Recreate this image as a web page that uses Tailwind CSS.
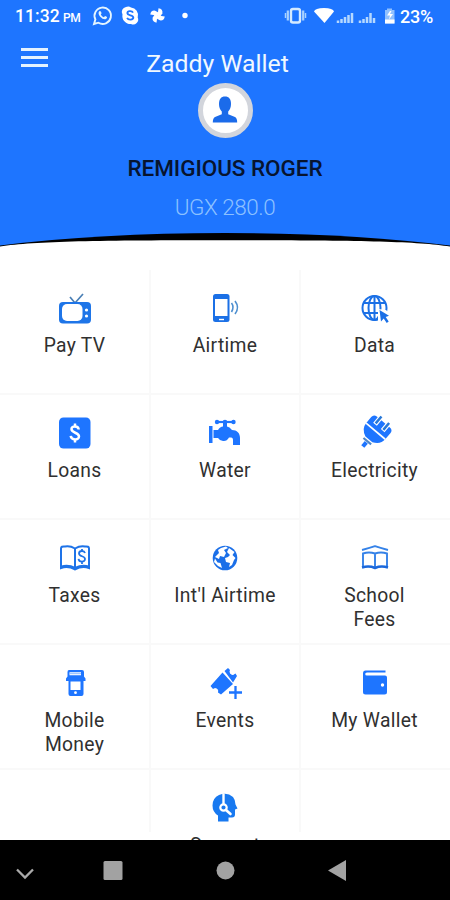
<!DOCTYPE html>
<html lang="en">
<head>
<meta charset="utf-8">
<title>Zaddy Wallet</title>
<script src="https://cdn.jsdelivr.net/npm/@tailwindcss/browser@4"></script>
</head>
<body class="bg-white">
<div class="relative flex h-[900px] w-[450px] flex-col overflow-hidden bg-white font-['Roboto',sans-serif] text-[#303030]">
  <header class="flex h-[270px] shrink-0 flex-col">
    <div class="flex h-[233px] shrink-0 flex-col bg-[#1e75ff]">
      <div class="flex h-8 items-center text-white">
        <div class="ml-[15px] flex w-[67px] items-baseline pt-px text-[17.500px] leading-8 font-medium whitespace-nowrap"><span class="tracking-[0.1px]">11:32</span><span class="ml-[3px] text-[12px] tracking-[-0.4px]">PM</span></div>
        <svg class="ml-[10px]" width="100" height="22" viewBox="92 5 100 22" fill="none">
          <path d="M94 24l1.400-4.600A8.200 8.200 0 1 1 98.400 22.700Z" stroke="#e4f5ff" stroke-width="1.900"/>
          <path d="M99 11.500q1-1.200 2 .2l.6 1.500-.8 1.200q1 2 3 2.800l1.300-1.200 2 1.100q.2 1.500-1.600 2.200-2.700.4-5.300-2.500-2.500-3-1.200-5.300Z" fill="#e4f5ff"/>
          <path d="M126 7a5 5 0 0 1 5 .4 7.800 7.800 0 0 1 6.700 10A5 5 0 0 1 131 24a8 8 0 0 1-8.500-9.500A5 5 0 0 1 126 7Z" fill="#fff"/>
          <path d="M133 12.600c-1-2-5.600-2-5.600.5 0 3 5.900 1.500 5.900 4.500 0 2.500-5 2.700-6.200.3" stroke="#1e75ff" stroke-width="1.900"/>
          <g fill="#fff" transform="rotate(8 157.500 15.500)"><path d="M157.500 16.500V8.200q4.500 0 4.500 4.300l-1.500 3.500Z"/><path d="M156.500 15.500h8.300q0 4.500-4.300 4.500l-3.500-1.500Z"/><path d="M157.500 14.500v8.300q-4.500 0-4.500-4.300l1.500-3.500Z"/><path d="M158.500 15.500h-8.300q0-4.500 4.300-4.500l3.500 1.500Z"/></g>
          <circle cx="185" cy="15.500" r="2.700" fill="#fff"/>
        </svg>
        <svg class="ml-[92px]" width="114" height="22" viewBox="284 5 114 22" fill="none">
          <rect x="291" y="9" width="9" height="13.500" rx="2" stroke="#d5eaff" stroke-width="2.400"/>
          <path d="M287.800 10.500v10M303.200 10.500v10" stroke="#a9d2ff" stroke-width="2.200"/><path d="M285.500 13v5M305.500 13v5" stroke="#a9d2ff" stroke-width="1.500"/>
          <path d="M314 11.500q1-3.500 10-3.500t10 3.500L324.500 23Z" fill="#fff"/>
          <path d="M338 20.500V23M341.500 19v4M345 17v6M348.500 15v8M352 13v10M360 20.500V23M363.500 19v4M367 17v6M370.500 13v10M374 18v5" stroke="#b5d8ff" stroke-width="2.500"/>
          <path d="M385 10h2V8.500h5V10h2.500v13.500H385Z" fill="#8fc0ff"/><path d="M385 19.500h9.500v4H385Z" fill="#fff"/><path d="M390 11l-3 4.500h3l-1 4 4-5.500h-3l1.500-3Z" fill="#fff"/>
        </svg>
        <span class="ml-[2px] text-[18px] font-medium tracking-[-0.200px]">23%</span>
      </div>
      <div class="flex h-[50px]">
        <div class="ml-[21px] mt-[16px] flex w-[27px] flex-col gap-[5.500px]"><i class="block h-[2.700px] bg-[#e4f2ff]"></i><i class="block h-[2.700px] bg-[#e4f2ff]"></i><i class="block h-[2.700px] bg-[#e4f2ff]"></i></div>
        <h1 class="ml-[77px] mt-[15.500px] w-[185px] text-center text-[24.800px] leading-8 text-[#f0f8ff]">Zaddy Wallet</h1>
      </div>
      <div class="mt-[1px] flex size-[55px] items-center justify-center self-center rounded-full border-[5px] border-[#d2d5dc] bg-white">
        <svg width="26" height="30" viewBox="0 0 26 30" fill="#1b6bea"><path d="M7 8c0-5 2-7.500 6-7.500S19 3 19 8c0 3-1 6-2.800 7.500v2.700L23 21q2.200 1 2.200 5.500H.8Q.8 22 3 21l6.800-2.800v-2.700C8 14 7 11 7 8Z"/></svg>
      </div>
      <div class="mt-[16px] text-center text-[22.500px] leading-7 font-medium tracking-[-0.050px] text-[#07142f]">REMIGIOUS ROGER</div>
      <div class="mt-[11px] text-center text-[22.500px] leading-7 font-light tracking-[-0.480px] text-[#8cc1ff]">UGX 280.0</div>
    </div>
    <svg class="shrink-0" width="450" height="37" viewBox="0 0 450 37">
      <path d="M0 0H450V14H0Z" fill="#1e75ff"/>
      <path d="M0 12.500Q100 0 225 0T450 12.500V15H0Z" fill="#000"/>
      <path d="M0 13.500C35 8 100 7.200 225 7.200S415 8 450 13.500V37H0Z" fill="#fff"/>
    </svg>
  </header>
  <main class="grid h-[570px] shrink-0 auto-rows-[125px] grid-cols-[151px_150px_149px] overflow-hidden text-[19.300px] leading-6 tracking-[0.300px]">
    <div class="flex flex-col items-center border-r-2 border-b-2 border-[#f9f9f9] pt-5">
      <svg width="40" height="40" viewBox="0 0 40 40" fill="none"><path d="M20 13l-5-6M20 13l8-9" stroke="#4a7fb5" stroke-width="1.700"/><rect x="4" y="12" width="32" height="21.500" rx="4" fill="#1e75e8"/><rect x="7" y="14" width="20.500" height="17" rx="5" fill="#fff"/><circle cx="31.500" cy="20" r="1.600" fill="#fff"/><circle cx="31.500" cy="26" r="1.600" fill="#fff"/></svg>
      <span class="mt-1">Pay TV</span>
    </div>
    <div class="flex flex-col items-center border-r-2 border-b-2 border-[#f9f9f9] pt-[19px]">
      <svg width="40" height="40" viewBox="0 0 40 40" fill="none"><rect x="8" y="5" width="16.500" height="28" rx="2.500" fill="#1b70e6"/><path d="M10 10h12.500v17H10Z" fill="#fff"/><path d="M14 30.500h5" stroke="#fff" stroke-width="1.400"/><path d="M26.500 14q3 4 0 9M30 12q5 6.500 0 13" stroke="#4d8fd0" stroke-width="1.600"/></svg>
      <span class="mt-[5px]">Airtime</span>
    </div>
    <div class="flex flex-col items-center border-b-2 border-[#f9f9f9] pt-5 pr-0.5">
      <svg width="40" height="40" viewBox="0 0 40 40" fill="none" stroke="#1b70e6" stroke-width="2"><circle cx="19.500" cy="18" r="12"/><ellipse cx="19.500" cy="18" rx="6" ry="12"/><path d="M19.500 6v24M9 13h21.500M9 23h22"/><path d="M23 19v17h12V24l-4-4Z" fill="#fff" stroke="none"/><path d="M24.500 20l9.500 5.700-3.300 1.300 3 4.500-2 1.400-3-4.500-2.700 3Z" fill="#1b70e6" stroke="none"/></svg>
      <span class="mt-1">Data</span>
    </div>
    <div class="flex flex-col items-center border-r-2 border-b-2 border-[#f9f9f9] pt-[19px]">
      <svg width="40" height="40" viewBox="0 0 40 40" fill="none"><rect x="4" y="3.500" width="31.500" height="31" rx="4.500" fill="#1e75ff"/><path d="M23.700 15.500c-.3-4-7.200-4-7.200-.4 0 4.200 7.500 3.100 7.500 7.400 0 4-7.700 4-8.300-.6M20 9.500v3M20 25v3.500" stroke="#fff" stroke-width="2.500"/></svg>
      <span class="mt-[5px]">Loans</span>
    </div>
    <div class="flex flex-col items-center border-r-2 border-b-2 border-[#f9f9f9] pt-[19px]">
      <svg width="40" height="40" viewBox="0 0 40 40" fill="#1e75ff"><path d="M4 12h3.500v17H4ZM8.500 16H13q2-3.500 5-3.500V9h4v3.500q2.500 0 5 3.500c5 0 8 3 8 8v7h-7v-5c0-2-1-2.500-3-2.500h-1q-2 3.500-5 3.500h-1q-3 0-5-3H8.500Z"/><path d="M12 8h16" stroke="#1e75ff" stroke-width="2.200"/><circle cx="12" cy="8" r="2.200"/><circle cx="20" cy="8" r="2.300"/><circle cx="28.500" cy="8" r="2.200"/></svg>
      <span class="mt-[5px]">Water</span>
    </div>
    <div class="flex flex-col items-center border-b-2 border-[#f9f9f9] pt-[19px] pr-0.5">
      <svg width="40" height="40" viewBox="0 0 40 40" fill="none"><g transform="rotate(40 20 18)"><path d="M7.500 9q0-4 4-4h17q4 0 4 4v8q0 7-8 10.500h-9q-8-3.500-8-10.500Z" fill="#1e75ff"/><path d="M15 12V3M25 12V3" stroke="#fff" stroke-width="4.800"/><path d="M15 11V2M25 11V2" stroke="#2878d8" stroke-width="2.500"/><path d="M7.500 17h25" stroke="#fff" stroke-width="1.700"/><path d="M15 30h10" stroke="#4d86c8" stroke-width="2.200"/><path d="M20 31.500v5.500" stroke="#1e75ff" stroke-width="4"/></g></svg>
      <span class="mt-[5px]">Electricity</span>
    </div>
    <div class="flex flex-col items-center border-r-2 border-b-2 border-[#f9f9f9] pt-[19px]">
      <svg width="40" height="40" viewBox="0 0 40 40" fill="none" stroke="#1e73e8" stroke-width="2"><path d="M20 9.500q-5-3-10-2-4-.5-4 2V29q7-2.500 14 1.500 7-4 14-1.500V9.500q0-2.500-4-2-5-1-10 2Z"/><path d="M20 9.500v20M6.500 27.500q7-2 13.500 1.500 7-3.500 13.500-1.500"/><path d="M30 14c-1-3-6-2.500-6 .5 0 3.500 6 2 6 5.500 0 3.500-6 3.500-6.500-.2M27 10v2M27 22v3" stroke-width="1.800"/></svg>
      <span class="mt-[5px]">Taxes</span>
    </div>
    <div class="flex flex-col items-center border-r-2 border-b-2 border-[#f9f9f9] pt-[19px]">
      <svg width="40" height="40" viewBox="0 0 40 40"><circle cx="20" cy="19" r="12.300" fill="#1b6fe8"/><path d="M16 9l-3 2 1 3-4 4 4 2 1-3 4 1 2-4-2-3 4-2-2-1.500ZM10 19.500l2.500 4 3 .5 1.500 5-4-2-4-4ZM24 9l-2 4 3 3-2 2-3 1 1 4 4 1-1 4 3-2 2-5 1.500-2-3-3 2-3Z" fill="#fff"/></svg>
      <span class="mt-[5px]">Int'l Airtime</span>
    </div>
    <div class="flex flex-col items-center border-b-2 border-[#f9f9f9] pt-[19px] pr-0.5 text-center">
      <svg width="40" height="40" viewBox="0 0 40 40" fill="none" stroke="#3582e8" stroke-width="1.900"><path d="M7 11q6-1.500 13-3.800Q27 9.500 33 11M8 28V14.500q6-2 12 0 6-2 12 0V28M20 14.500V28"/><path d="M7 28.500q7-2 13 .5 6-2.500 13-.5" stroke="#1b68dc" stroke-width="2.500"/></svg>
      <span class="mt-[5px] w-[100px]">School<br>Fees</span>
    </div>
    <div class="flex flex-col items-center border-r-2 border-b-2 border-[#f9f9f9] pt-[19px] text-center">
      <svg width="40" height="40" viewBox="0 0 40 40"><path d="M14 6h13q2 0 2 2v4.500l1.500 2v2.500h-2v13q0 2-2 2h-11q-2 0-2-2V17h-2.500v-2.500l1.500-2V8q0-2 1.500-2Z" fill="#1e75ff"/><path d="M14.500 8.200h11.500v3H14.500ZM15.500 17.500h10V26h-10Z" fill="#fff"/><path d="M14.500 9.700h11.500" stroke="#8bb9ff"/><circle cx="20.500" cy="28.700" r="1.400" fill="#fff"/></svg>
      <span class="mt-[5px]">Mobile<br>Money</span>
    </div>
    <div class="flex flex-col items-center border-r-2 border-b-2 border-[#f9f9f9] pt-[19px]">
      <svg width="40" height="40" viewBox="0 0 40 40" fill="#1e75ff"><path d="M17.500 8.500L28 20 16 30.500l-3-2q1-4-3-4.500l-2 1-2.500-3ZM19.500 7l3.500-3 2 2q-1.500 4 3 5l2.500-1.500L32 12l-4 6.500Z"/><path d="M30 7.500l-2 3.500q-4-1-3-5Z" fill="#fff"/><path d="M30.500 22v13M24 28.500h13" stroke="#1e75ff" stroke-width="2.300"/></svg>
      <span class="mt-[5px]">Events</span>
    </div>
    <div class="flex flex-col items-center border-b-2 border-[#f9f9f9] pt-[19px] pr-0.5">
      <svg width="40" height="40" viewBox="0 0 40 40"><path d="M10.500 6.500H30.500v2H12q-1.800 0-1.800 1.500T12 11.500H30q2 0 2 2V28q0 2.500-2.500 2.500h-19Q8 30.500 8 28V9.500q0-3 2.500-3Z" fill="#1e75ff"/><circle cx="27.500" cy="21" r="1.700" fill="#fff"/></svg>
      <span class="mt-[5px]">My Wallet</span>
    </div>
    <div class="h-[62px] border-r-2 border-[#f9f9f9]"></div>
    <div class="flex h-[62px] flex-col items-center border-r-2 border-[#f9f9f9] pt-[19px]">
      <svg class="shrink-0" width="40" height="40" viewBox="0 0 40 40" fill="none"><path d="M13 32.500v-6Q7.500 23 7.500 16.500 7.500 9 14 6q8-3.500 14 2 2.500 3 2.500 7.500l2 4-2.500 1v5q0 3-3 3h-3.500v4Z" fill="#1879f0"/><path d="M18.500 4.500V15" stroke="#fff" stroke-width="2.400"/><circle cx="18.500" cy="18.500" r="3.200" stroke="#fff" stroke-width="2.200"/><path d="M21 21l4.500 4" stroke="#fff" stroke-width="2.600" stroke-linecap="round"/></svg>
      <span class="mt-[5px] shrink-0">Support</span>
    </div>
  </main>
  <nav class="h-[60px] shrink-0 bg-black">
    <svg width="450" height="60" viewBox="0 840 450 60"><path d="M17 869.500l8 8 8-8" fill="none" stroke="#aaa" stroke-width="2.300"/><rect x="103.500" y="861" width="19" height="19" rx="1.500" fill="#a2a2a2"/><circle cx="225.500" cy="870.500" r="9" fill="#a2a2a2"/><path d="M328 870.500l18-10.500v21Z" fill="#a2a2a2"/></svg>
  </nav>
</div>
</body>
</html>
